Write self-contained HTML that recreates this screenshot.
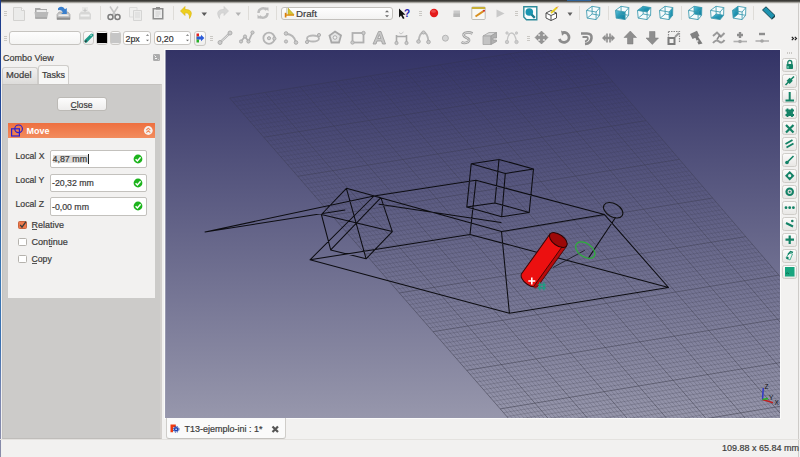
<!DOCTYPE html>
<html><head><meta charset="utf-8">
<style>
*{box-sizing:border-box;margin:0;padding:0}
html,body{width:800px;height:457px;overflow:hidden;background:#f2f1f0;font-family:"Liberation Sans",sans-serif;color:#3c3c3c}
.a{position:absolute}
.t{position:absolute;white-space:nowrap;font-size:9px;line-height:10px;-webkit-text-stroke:0.2px currentColor}
#topbar{left:0;top:0;width:800px;height:4px;background:linear-gradient(#353430 0,#45443f 30%,#8f8d88 55%,#d9d7d3 80%,#f2f1f0 100%)}
#lblue{left:0;top:0;width:1px;height:457px;background:linear-gradient(#1d3b8a,#2450a0 35%,#3a78b4 60%,#3a70b0 75%,#7a86b0 87%,#8a8ca8)}
#rline{left:798px;top:3px;width:1px;height:454px;background:#cdcbc8}
.handle{position:absolute;width:3px;height:6px;background:repeating-linear-gradient(#cac8c4 0 1px,transparent 1px 2px)}
.sep{position:absolute;width:1px;height:14px;background:#dedcd8}
#task{left:2px;top:84px;width:160px;height:354.5px;background:#cccbc9;border:1px solid #c4c2bf;border-right:2px solid #d4d1ce;border-bottom-color:#bfbdba}
#tabbar{}
.tab{position:absolute;border:1px solid #cfcdca;border-bottom:none;border-radius:3px 3px 0 0}
.btn{position:absolute;border:1px solid #bcbab6;border-radius:3px;background:linear-gradient(#fdfdfd,#eeedec)}
.inp{position:absolute;background:#fff;border:1px solid #c3c1bd;border-radius:2px}
.chk{position:absolute;width:9px;height:8.5px;border:1px solid #b5b2ad;border-radius:1.5px;background:#fff}
.okc{position:absolute;width:9px;height:9px;border-radius:50%;background:#19b019}
.snap{position:absolute;left:782px;width:14.5px;height:14px;border:1px solid #cfcdc9;border-radius:2.5px;background:linear-gradient(#fbfbfa,#e8e7e5)}
#view{left:166px;top:50px;width:614px;height:368px;overflow:hidden}
</style></head><body>
<div class="a" id="topbar"></div>
<div class="a" id="lblue"></div>
<div class="a" id="rline"></div>
<div class="a" style="left:567px;top:0;width:24px;height:1px;background:#2a6cb0;opacity:.8"></div>

<!-- toolbar row 1 -->
<div class="sep" style="left:100px;top:6px"></div>
<div class="sep" style="left:172.5px;top:6px"></div>
<div class="sep" style="left:247.5px;top:6px"></div>
<div class="sep" style="left:276px;top:6px"></div>
<div class="sep" style="left:578.5px;top:6px"></div>
<div class="sep" style="left:608px;top:6px"></div>
<div class="sep" style="left:680.5px;top:6px"></div>
<div class="sep" style="left:753px;top:6px"></div>
<svg class="a" style="left:13px;top:6px" width="13" height="15" viewBox="0 0 13 15" ><path d="M0.5 1.5H8.5L11.5 4.5V14.5H0.5Z" fill="#ebebea" stroke="#d3d2d0"/><path d="M8.5 1.5V4.5H11.5" fill="#fafafa" stroke="#d3d2d0"/></svg>
<svg class="a" style="left:34px;top:6px" width="15" height="14" viewBox="0 0 15 14" ><path d="M1 2H6L7 3H13V12.5H1Z" fill="#a8a8a8"/><path d="M2.5 4H12.5V11H2.5Z" fill="#ececec"/><path d="M0.5 6H14.5L13 12.5H1.5Z" fill="#b9b9b9"/><path d="M1.5 12H13" stroke="#9a9a9a"/></svg>
<svg class="a" style="left:56px;top:5px" width="15" height="16" viewBox="0 0 15 16" ><path d="M1 9.5L3 7H12L14 9.5V14.5H1Z" fill="#c4c4c4" stroke="#999" stroke-width="0.6"/><path d="M2.5 9.5H12.5V11H2.5Z" fill="#eeeeee"/><path d="M1 12.5H14V14.5H1Z" fill="#8f8f8f"/><path d="M2 3.2Q6 0 9 4.2L10.8 3V9H5L7 7.4Q5.5 4.6 2 5.2Z" fill="#3a7fcc"/></svg>
<svg class="a" style="left:78px;top:6px" width="14" height="15" viewBox="0 0 14 15" ><path d="M1 8L3 5.5H11L13 8V13.5H1Z" fill="#d7d7d6"/><path d="M2.5 8.5H11.5V10.5H2.5Z" fill="#f2f2f2"/><path d="M4 1H10V6H4Z" fill="#e6e6e5"/><path d="M7 2.5V5M5.5 4L7 5.5 8.5 4" stroke="#c0c0c0" fill="none"/></svg>
<svg class="a" style="left:107px;top:6px" width="14" height="15" viewBox="0 0 14 15" ><path d="M3 0.5L8.5 9M11 0.5L5.5 9" stroke="#c4c4c4" stroke-width="1.5"/><circle cx="3.5" cy="11" r="2.5" fill="none" stroke="#7c7c7c" stroke-width="1.5"/><circle cx="10.5" cy="11" r="2.5" fill="none" stroke="#7c7c7c" stroke-width="1.5"/></svg>
<svg class="a" style="left:129px;top:6px" width="14" height="15" viewBox="0 0 14 15" ><path d="M0.5 1.5H8V11H0.5Z" fill="#f0f0ef" stroke="#dcdcdb"/><path d="M4.5 4.5H12.5V14.5H4.5Z" fill="#ececeb" stroke="#d5d5d4"/><path d="M6 7H11M6 9H11M6 11H11" stroke="#d9d9d9"/></svg>
<svg class="a" style="left:152px;top:6px" width="13" height="15" viewBox="0 0 13 15" ><path d="M0.5 2H11.5V13.5H0.5Z" fill="#8e8e8e"/><path d="M2 3.5H10V12H2Z" fill="#ececec"/><path d="M4 1H8V3.5H4Z" fill="#8e8e8e"/><path d="M3.5 6H8.5M3.5 8H8.5M3.5 10H7" stroke="#cfcfcf"/></svg>
<svg class="a" style="left:180px;top:6px" width="14" height="14" viewBox="0 0 14 14" ><path d="M5 0.5L0.5 5L5 9.5V6.8Q10 6.5 9.5 12.5Q13.5 6 9 4Q7 3.3 5 3.5Z" fill="#edcf1c" stroke="#d8b210" stroke-width="0.6"/></svg>
<svg class="a" style="left:201px;top:12px" width="7" height="5" viewBox="0 0 7 5" ><path d="M0.5 0.5H6L3.25 4Z" fill="#5a5a5a"/></svg>
<svg class="a" style="left:215px;top:6px" width="14" height="14" viewBox="0 0 14 14" ><path d="M9 0.5L13.5 5L9 9.5V6.8Q4 6.5 4.5 12.5Q0.5 6 5 4Q7 3.3 9 3.5Z" fill="#d6d6d6" stroke="#cacaca" stroke-width="0.6"/></svg>
<svg class="a" style="left:235px;top:12px" width="7" height="5" viewBox="0 0 7 5" ><path d="M0.5 0.5H6L3.25 4Z" fill="#b3b3b3"/></svg>
<svg class="a" style="left:256px;top:6px" width="14" height="14" viewBox="0 0 14 14" ><path d="M2.5 7A4.5 4.5 0 0 1 10.5 4" stroke="#bdbdbd" stroke-width="2.4" fill="none"/><path d="M11.5 7A4.5 4.5 0 0 1 3.5 10" stroke="#bdbdbd" stroke-width="2.4" fill="none"/><path d="M9 1.5L12.5 1.5 12.5 5.5Z" fill="#bdbdbd"/><path d="M5 12.5L1.5 12.5 1.5 8.5Z" fill="#bdbdbd"/></svg>
<div class="btn" style="left:281px;top:6.5px;width:111.5px;height:13.5px;border-color:#c2c0bc;background:linear-gradient(#fefefe,#f3f3f2)"></div>
<svg class="a" style="left:284px;top:7px" width="11" height="12" viewBox="0 0 11 12" ><path d="M2.5 1V7" stroke="#c0c0b8" stroke-width="0.7"/><path d="M4 1V7.5H10Z" fill="#d4c432" stroke="#a89a20" stroke-width="0.5"/><path d="M1.5 7.3H10V8.8H1.5Z" fill="#e0900f"/><path d="M1.6 5.8V10.5" stroke="#d8800f" stroke-width="1.7"/></svg>
<div class="t" style="left:296px;top:9px;font-size:9.7px;color:#3b3b3b">Draft</div>
<svg class="a" style="left:384px;top:9px" width="6" height="10" viewBox="0 0 6 10" ><path d="M1 3.2L3 1.2 5 3.2ZM1 6.3L3 8.3 5 6.3Z" fill="#6a6a6a"/></svg>
<svg class="a" style="left:398px;top:8px" width="12" height="12" viewBox="0 0 12 12" ><path d="M1 0.5V9.5L3 7.5L5 11L6.5 10.2L4.6 6.8H7.5Z" fill="#111"/><text x="6" y="8.6" font-size="10" font-weight="bold" fill="#2424b0" font-family="Liberation Sans">?</text></svg>
<div class="handle" style="left:419px;top:11px"></div>
<div class="handle" style="left:515px;top:11px"></div>
<svg class="a" style="left:429px;top:8px" width="10" height="10" viewBox="0 0 10 10" ><circle cx="5" cy="5" r="4.2" fill="#e41b1b"/><ellipse cx="4.5" cy="3.2" rx="2.5" ry="1.5" fill="#f56a6a" opacity="0.6"/></svg>
<svg class="a" style="left:452.5px;top:9.5px" width="8" height="8" viewBox="0 0 8 8" ><rect x="0.5" y="0.5" width="6.5" height="6.5" fill="#cacaca"/><rect x="0.5" y="3.5" width="6.5" height="3.5" fill="#b8b8b8"/></svg>
<svg class="a" style="left:471px;top:6px" width="15" height="14" viewBox="0 0 15 14" ><rect x="0.8" y="1" width="13.4" height="12.5" rx="1" fill="#f8f8f4" stroke="#bdbdb8"/><rect x="0.8" y="1" width="13.4" height="2" fill="#c8b038"/><path d="M4.5 10.5L12.5 5.2" stroke="#d89020" stroke-width="2"/><circle cx="13" cy="4.8" r="1" fill="#d02020"/></svg>
<svg class="a" style="left:496px;top:9px" width="9" height="9" viewBox="0 0 9 9" ><path d="M0.5 0.5L8.5 4.5L0.5 8.5Z" fill="#c9c9c9"/></svg>
<svg class="a" style="left:523px;top:6px" width="15" height="15" viewBox="0 0 15 15" ><path d="M0.8 0.8H13.8V13.8H3.5L0.8 11Z" fill="#fbfdfd" stroke="#2e8b9a" stroke-width="1.4"/><circle cx="6.3" cy="6" r="3.8" fill="#1a95b0"/><path d="M8.5 8.5L11.8 11.8" stroke="#1a7d90" stroke-width="2.4"/></svg>
<svg class="a" style="left:545px;top:6px" width="14" height="15" viewBox="0 0 14 15" ><path d="M1 7L6 4.5L11.5 7V12L6 14.5L1 12Z" fill="#fff" stroke="#505050" stroke-width="1"/><path d="M1 7L6 9.5L11.5 7M6 9.5V14.5" stroke="#505050" fill="none"/><path d="M6 7L12 1.5" stroke="#e8d020" stroke-width="1.8"/><path d="M11.5 2L13 0.5" stroke="#e07030" stroke-width="1"/></svg>
<svg class="a" style="left:567px;top:12px" width="7" height="5" viewBox="0 0 7 5" ><path d="M0.5 0.5H5.5L3 4Z" fill="#606060"/></svg>
<svg class="a" style="left:582.5px;top:3px" width="20" height="20" viewBox="0 0 20 20" ><defs><linearGradient id="cg" x1="0" y1="0" x2="1" y2="1"><stop offset="0" stop-color="#62c4de"/><stop offset="0.5" stop-color="#2296b4"/><stop offset="1" stop-color="#137f9c"/></linearGradient></defs><polygon points="3.5,7.4 9,3.3 16.8,4.6 16.6,12.3 13.1,16.6 4.2,15.1" fill="#f6fbfc"/><path d="M3.5 7.4L13.1 9M13.1 9L13.1 16.6M13.1 16.6L4.2 15.1M4.2 15.1L3.5 7.4M9 3.3L16.8 4.6M16.8 4.6L16.6 12.3M16.6 12.3L9.2 11M9.2 11L9 3.3M3.5 7.4L9 3.3M13.1 9L16.8 4.6M13.1 16.6L16.6 12.3M4.2 15.1L9.2 11" stroke="#3a98ae" stroke-width="0.85" fill="none"/></svg>
<svg class="a" style="left:611.5px;top:3px" width="20" height="20" viewBox="0 0 20 20" ><defs><linearGradient id="cg" x1="0" y1="0" x2="1" y2="1"><stop offset="0" stop-color="#62c4de"/><stop offset="0.5" stop-color="#2296b4"/><stop offset="1" stop-color="#137f9c"/></linearGradient></defs><polygon points="3.5,7.4 9,3.3 16.8,4.6 16.6,12.3 13.1,16.6 4.2,15.1" fill="#f6fbfc"/><polygon points="3.5,7.4 13.1,9 13.1,16.6 4.2,15.1" fill="url(#cg)"/><path d="M3.5 7.4L13.1 9M13.1 9L13.1 16.6M13.1 16.6L4.2 15.1M4.2 15.1L3.5 7.4M9 3.3L16.8 4.6M16.8 4.6L16.6 12.3M16.6 12.3L9.2 11M9.2 11L9 3.3M3.5 7.4L9 3.3M13.1 9L16.8 4.6M13.1 16.6L16.6 12.3M4.2 15.1L9.2 11" stroke="#3a98ae" stroke-width="0.85" fill="none"/></svg>
<svg class="a" style="left:633.5px;top:3px" width="20" height="20" viewBox="0 0 20 20" ><defs><linearGradient id="cg" x1="0" y1="0" x2="1" y2="1"><stop offset="0" stop-color="#62c4de"/><stop offset="0.5" stop-color="#2296b4"/><stop offset="1" stop-color="#137f9c"/></linearGradient></defs><polygon points="3.5,7.4 9,3.3 16.8,4.6 16.6,12.3 13.1,16.6 4.2,15.1" fill="#f6fbfc"/><polygon points="3.5,7.4 13.1,9 16.8,4.6 9,3.3" fill="url(#cg)"/><path d="M3.5 7.4L13.1 9M13.1 9L13.1 16.6M13.1 16.6L4.2 15.1M4.2 15.1L3.5 7.4M9 3.3L16.8 4.6M16.8 4.6L16.6 12.3M16.6 12.3L9.2 11M9.2 11L9 3.3M3.5 7.4L9 3.3M13.1 9L16.8 4.6M13.1 16.6L16.6 12.3M4.2 15.1L9.2 11" stroke="#3a98ae" stroke-width="0.85" fill="none"/></svg>
<svg class="a" style="left:655.5px;top:3px" width="20" height="20" viewBox="0 0 20 20" ><defs><linearGradient id="cg" x1="0" y1="0" x2="1" y2="1"><stop offset="0" stop-color="#62c4de"/><stop offset="0.5" stop-color="#2296b4"/><stop offset="1" stop-color="#137f9c"/></linearGradient></defs><polygon points="3.5,7.4 9,3.3 16.8,4.6 16.6,12.3 13.1,16.6 4.2,15.1" fill="#f6fbfc"/><polygon points="13.1,9 16.8,4.6 16.6,12.3 13.1,16.6" fill="url(#cg)"/><path d="M3.5 7.4L13.1 9M13.1 9L13.1 16.6M13.1 16.6L4.2 15.1M4.2 15.1L3.5 7.4M9 3.3L16.8 4.6M16.8 4.6L16.6 12.3M16.6 12.3L9.2 11M9.2 11L9 3.3M3.5 7.4L9 3.3M13.1 9L16.8 4.6M13.1 16.6L16.6 12.3M4.2 15.1L9.2 11" stroke="#3a98ae" stroke-width="0.85" fill="none"/></svg>
<svg class="a" style="left:684.5px;top:3px" width="20" height="20" viewBox="0 0 20 20" ><defs><linearGradient id="cg" x1="0" y1="0" x2="1" y2="1"><stop offset="0" stop-color="#62c4de"/><stop offset="0.5" stop-color="#2296b4"/><stop offset="1" stop-color="#137f9c"/></linearGradient></defs><polygon points="3.5,7.4 9,3.3 16.8,4.6 16.6,12.3 13.1,16.6 4.2,15.1" fill="#f6fbfc"/><polygon points="9,3.3 16.8,4.6 16.6,12.3 9.2,11" fill="url(#cg)"/><path d="M3.5 7.4L13.1 9M13.1 9L13.1 16.6M13.1 16.6L4.2 15.1M4.2 15.1L3.5 7.4M9 3.3L16.8 4.6M16.8 4.6L16.6 12.3M16.6 12.3L9.2 11M9.2 11L9 3.3M3.5 7.4L9 3.3M13.1 9L16.8 4.6M13.1 16.6L16.6 12.3M4.2 15.1L9.2 11" stroke="#3a98ae" stroke-width="0.85" fill="none"/></svg>
<svg class="a" style="left:706.5px;top:3px" width="20" height="20" viewBox="0 0 20 20" ><defs><linearGradient id="cg" x1="0" y1="0" x2="1" y2="1"><stop offset="0" stop-color="#62c4de"/><stop offset="0.5" stop-color="#2296b4"/><stop offset="1" stop-color="#137f9c"/></linearGradient></defs><polygon points="3.5,7.4 9,3.3 16.8,4.6 16.6,12.3 13.1,16.6 4.2,15.1" fill="#f6fbfc"/><polygon points="4.2,15.1 13.1,16.6 16.6,12.3 9.2,11" fill="url(#cg)"/><path d="M3.5 7.4L13.1 9M13.1 9L13.1 16.6M13.1 16.6L4.2 15.1M4.2 15.1L3.5 7.4M9 3.3L16.8 4.6M16.8 4.6L16.6 12.3M16.6 12.3L9.2 11M9.2 11L9 3.3M3.5 7.4L9 3.3M13.1 9L16.8 4.6M13.1 16.6L16.6 12.3M4.2 15.1L9.2 11" stroke="#3a98ae" stroke-width="0.85" fill="none"/></svg>
<svg class="a" style="left:728.5px;top:3px" width="20" height="20" viewBox="0 0 20 20" ><defs><linearGradient id="cg" x1="0" y1="0" x2="1" y2="1"><stop offset="0" stop-color="#62c4de"/><stop offset="0.5" stop-color="#2296b4"/><stop offset="1" stop-color="#137f9c"/></linearGradient></defs><polygon points="3.5,7.4 9,3.3 16.8,4.6 16.6,12.3 13.1,16.6 4.2,15.1" fill="#f6fbfc"/><polygon points="3.5,7.4 9,3.3 9.2,11 4.2,15.1" fill="url(#cg)"/><path d="M3.5 7.4L13.1 9M13.1 9L13.1 16.6M13.1 16.6L4.2 15.1M4.2 15.1L3.5 7.4M9 3.3L16.8 4.6M16.8 4.6L16.6 12.3M16.6 12.3L9.2 11M9.2 11L9 3.3M3.5 7.4L9 3.3M13.1 9L16.8 4.6M13.1 16.6L16.6 12.3M4.2 15.1L9.2 11" stroke="#3a98ae" stroke-width="0.85" fill="none"/></svg>
<svg class="a" style="left:761px;top:6px" width="15" height="14" viewBox="0 0 15 14" ><path d="M1.5 4L5 0.8L14 9.5L10.5 12.8Z" fill="#1e93b0" stroke="#0d3c48" stroke-width="0.9"/><path d="M10.5 12.8L14 9.5V11L11 13.5Z" fill="#0d3c48"/></svg>
<svg class="a" style="left:791px;top:36px" width="7" height="5" viewBox="0 0 7 5" ><path d="M0.8 0.8L2.5 2.5L0.8 4.2M3.8 0.8L5.5 2.5L3.8 4.2" stroke="#222" stroke-width="1.2" fill="none"/></svg>
<div class="inp" style="left:8.5px;top:30.5px;width:72px;height:14.5px;border-color:#c6c4c0;border-radius:3px;background:linear-gradient(#fdfdfd,#f4f4f3)"></div>
<div class="btn" style="left:82.5px;top:30.5px;width:11.5px;height:14.5px;border-color:#cbc9c5"></div>
<svg class="a" style="left:83.5px;top:32.5px" width="10" height="10" viewBox="0 0 10 10" ><path d="M2 8L7.8 2.2" stroke="#1d9a88" stroke-width="3.2" stroke-linecap="round"/><path d="M6.5 2.8L7.8 1.8" stroke="#a8dcd0" stroke-width="1.2"/><path d="M1 9L2.6 7.4" stroke="#2a3a3a" stroke-width="1.4"/></svg>
<div class="btn" style="left:95.5px;top:30.5px;width:12px;height:14.5px;border-color:#cbc9c5"></div>
<div class="a" style="left:97px;top:32.5px;width:9.5px;height:10.5px;background:#000"></div>
<div class="btn" style="left:109.5px;top:30.5px;width:11.5px;height:14.5px;border-color:#cbc9c5"></div>
<div class="a" style="left:111px;top:32.5px;width:8.5px;height:10.5px;background:#c6c6c6"></div>
<div class="inp" style="left:123px;top:31px;width:27.5px;height:14px;border-color:#c9c7c3;border-radius:3px"></div>
<div class="t" style="left:125.5px;top:33.5px;font-size:8.9px;color:#333">2px</div>
<svg class="a" style="left:145px;top:33px" width="5" height="10" viewBox="0 0 5 10" ><path d="M0.9 2.8L2.5 1.2 4.1 2.8ZM0.9 6.7L2.5 8.3 4.1 6.7Z" fill="#707070"/></svg>
<div class="inp" style="left:153.5px;top:31px;width:37px;height:14px;border-color:#c9c7c3;border-radius:3px"></div>
<div class="t" style="left:156.5px;top:33.5px;font-size:8.8px;color:#333">0,20</div>
<svg class="a" style="left:185px;top:33px" width="5" height="10" viewBox="0 0 5 10" ><path d="M0.9 2.8L2.5 1.2 4.1 2.8ZM0.9 6.7L2.5 8.3 4.1 6.7Z" fill="#707070"/></svg>
<div class="btn" style="left:193.5px;top:30.5px;width:12px;height:15px;border-color:#cbc9c5"></div>
<svg class="a" style="left:195px;top:32px" width="10" height="12" viewBox="0 0 10 12" ><rect x="1.5" y="1.5" width="2.5" height="3" fill="#e52020"/><rect x="1.5" y="4.5" width="2.5" height="3" fill="#f0d020"/><rect x="1.5" y="7.5" width="2.5" height="3" fill="#28b028"/><path d="M1.5 4.5H6V2.8L9.3 6L6 9.2V7.5H1.5Z" fill="#2a5ad8"/></svg>
<div class="handle" style="left:210px;top:35.5px"></div>
<div class="handle" style="left:527px;top:35.5px"></div>
<svg class="a" style="left:217px;top:30px" width="16" height="16" viewBox="0 0 16 16" ><path d="M3 12.5L13 3" stroke="#b0b0b0" stroke-width="2.4"/><path d="M3 12.5L13 3" stroke="#e9e9e9" stroke-width="0.9"/><circle cx="3" cy="12.5" r="2" fill="#cbcbcb" stroke="#a9a9a9" stroke-width="0.9"/><circle cx="13" cy="3" r="2" fill="#cbcbcb" stroke="#a9a9a9" stroke-width="0.9"/></svg>
<svg class="a" style="left:239px;top:30px" width="16" height="16" viewBox="0 0 16 16" ><path d="M2 11.5L6 6.5L9.5 11.5L13.5 2.5" stroke="#b4b4b4" stroke-width="1.8" fill="none"/><circle cx="2" cy="11.5" r="1.6" fill="#cbcbcb" stroke="#a9a9a9" stroke-width="0.9"/><circle cx="6" cy="6.5" r="1.6" fill="#cbcbcb" stroke="#a9a9a9" stroke-width="0.9"/><circle cx="9.5" cy="11.5" r="1.6" fill="#cbcbcb" stroke="#a9a9a9" stroke-width="0.9"/><circle cx="13.5" cy="2.5" r="1.6" fill="#cbcbcb" stroke="#a9a9a9" stroke-width="0.9"/></svg>
<svg class="a" style="left:262px;top:31px" width="15" height="15" viewBox="0 0 15 15" ><circle cx="7" cy="7.2" r="5.6" fill="none" stroke="#b5b5b5" stroke-width="1.8"/><circle cx="7" cy="7.2" r="1.6" fill="#cbcbcb" stroke="#a9a9a9" stroke-width="0.9"/><circle cx="12.4" cy="7.6" r="1.6" fill="#cbcbcb" stroke="#a9a9a9" stroke-width="0.9"/></svg>
<svg class="a" style="left:283px;top:30px" width="16" height="16" viewBox="0 0 16 16" ><path d="M3 4Q11 4 13 12.5" stroke="#b7b7b7" stroke-width="1.8" fill="none"/><circle cx="3" cy="3.5" r="1.8" fill="#cbcbcb" stroke="#a9a9a9" stroke-width="0.9"/><circle cx="13" cy="12.5" r="1.8" fill="#cbcbcb" stroke="#a9a9a9" stroke-width="0.9"/><circle cx="3" cy="11.5" r="1.6" fill="#cbcbcb" stroke="#a9a9a9" stroke-width="0.9"/></svg>
<svg class="a" style="left:305px;top:31px" width="17" height="15" viewBox="0 0 17 15" ><ellipse cx="8" cy="7.5" rx="6" ry="3" fill="none" stroke="#b7b7b7" stroke-width="1.8"/><circle cx="14" cy="4" r="1.6" fill="#cbcbcb" stroke="#a9a9a9" stroke-width="0.9"/><circle cx="2" cy="11" r="1.6" fill="#cbcbcb" stroke="#a9a9a9" stroke-width="0.9"/></svg>
<svg class="a" style="left:328px;top:30px" width="15" height="16" viewBox="0 0 15 16" ><path d="M7 1.5L13 5.5L11 12.5H3.5L1.5 5.5Z" fill="#e4e4e4" stroke="#a8a8a8" stroke-width="1.8"/><circle cx="7" cy="7.5" r="1.8" fill="#f3f3f3" stroke="#b0b0b0"/></svg>
<svg class="a" style="left:350px;top:30px" width="16" height="16" viewBox="0 0 16 16" ><rect x="2.5" y="3" width="11" height="9.5" fill="none" stroke="#b0b0b0" stroke-width="1.8"/><circle cx="2.5" cy="12.5" r="1.7" fill="#cbcbcb" stroke="#a9a9a9" stroke-width="0.9"/><circle cx="13.5" cy="3" r="1.7" fill="#cbcbcb" stroke="#a9a9a9" stroke-width="0.9"/></svg>
<svg class="a" style="left:372px;top:30px" width="15" height="16" viewBox="0 0 15 16" ><path d="M1 14L6.5 1.5H9L13.5 14H10.5L9.5 11H5L4 14ZM5.8 8.5H8.8L7.3 4.5Z" fill="#c6c6c6" stroke="#9c9c9c" stroke-width="0.8"/></svg>
<svg class="a" style="left:394px;top:30px" width="15" height="16" viewBox="0 0 15 16" ><path d="M2.5 5V13M12.5 5V13M2.5 6.5H12.5" stroke="#ababab" stroke-width="1.6"/><path d="M5 2.5L7 4L9.5 2" stroke="#c8c8c8" stroke-width="1" fill="none"/><circle cx="2.5" cy="13" r="1.6" fill="#cbcbcb" stroke="#a9a9a9" stroke-width="0.9"/><circle cx="12.5" cy="13" r="1.6" fill="#cbcbcb" stroke="#a9a9a9" stroke-width="0.9"/></svg>
<svg class="a" style="left:416px;top:30px" width="15" height="16" viewBox="0 0 15 16" ><path d="M2.5 11.5Q3.5 2.5 7.5 2.5Q11.5 2.5 12.5 11.5" stroke="#b8b8b8" stroke-width="1.8" fill="none"/><circle cx="2.5" cy="11.5" r="1.8" fill="#cbcbcb" stroke="#a9a9a9" stroke-width="0.9"/><circle cx="7.5" cy="2.5" r="1.6" fill="#cbcbcb" stroke="#a9a9a9" stroke-width="0.9"/><circle cx="12.5" cy="12" r="1.8" fill="#cbcbcb" stroke="#a9a9a9" stroke-width="0.9"/></svg>
<svg class="a" style="left:441px;top:34px" width="9" height="9" viewBox="0 0 9 9" ><circle cx="4.4" cy="4.2" r="3" fill="#d5d5d5" stroke="#b0b0b0" stroke-width="0.9"/></svg>
<svg class="a" style="left:460px;top:30px" width="15" height="16" viewBox="0 0 15 16" ><path d="M12.5 3.5Q9 1.5 5 3Q1.5 5 6 7.5Q11 9.5 8 12Q4 14 1.5 12" stroke="#a3a3a3" stroke-width="2.6" fill="none"/><path d="M12.5 3.5Q9 1.5 5 3Q1.5 5 6 7.5Q11 9.5 8 12Q4 14 1.5 12" stroke="#e5e5e5" stroke-width="0.8" fill="none"/></svg>
<svg class="a" style="left:482px;top:30px" width="16" height="16" viewBox="0 0 16 16" ><path d="M1 6L7 2.5H14.5L9 6Z" fill="#d8d8d8" stroke="#a5a5a5" stroke-width="0.8"/><path d="M1 6H9V14.5L1 14.5Z" fill="#c3c3c3" stroke="#a5a5a5" stroke-width="0.8"/><path d="M9 6L14.5 2.5V8H11V10H14.5V11.5L9 14.5Z" fill="#b0b0b0" stroke="#9b9b9b" stroke-width="0.8"/></svg>
<svg class="a" style="left:504px;top:30px" width="16" height="16" viewBox="0 0 16 16" ><path d="M3 12Q4 3 7.5 3Q11 3 12.5 12" stroke="#c5c5c5" stroke-width="1.3" fill="none"/><path d="M3 3L5.5 5M12.5 3L10 5" stroke="#c8c8c8"/><circle cx="3" cy="12" r="1.7" fill="#cbcbcb" stroke="#bdbdbd" stroke-width="0.9"/><circle cx="12.5" cy="12" r="1.7" fill="#cbcbcb" stroke="#bdbdbd" stroke-width="0.9"/><circle cx="3" cy="3" r="1.2" fill="#cbcbcb" stroke="#c5c5c5" stroke-width="0.9"/><circle cx="12.5" cy="3" r="1.2" fill="#cbcbcb" stroke="#c5c5c5" stroke-width="0.9"/></svg>
<svg class="a" style="left:534px;top:30px" width="16" height="16" viewBox="0 0 16 16" ><path d="M7.5 1L10.5 4H8.7V6.3H11V4.5L14 7.5L11 10.5V8.7H8.7V11H10.5L7.5 14L4.5 11H6.3V8.7H4V10.5L1 7.5L4 4.5V6.3H6.3V4H4.5Z" fill="#959595" stroke="#818181" stroke-width="0.5"/></svg>
<svg class="a" style="left:557px;top:30px" width="15" height="16" viewBox="0 0 15 16" ><path d="M6 2.5A5 5 0 1 1 2.3 9" stroke="#8c8c8c" stroke-width="2.8" fill="none"/><path d="M4 0.5L8.5 2.8L5 5.8Z" fill="#8c8c8c"/></svg>
<svg class="a" style="left:579px;top:30px" width="15" height="16" viewBox="0 0 15 16" ><path d="M2 3.5H8Q13 3.5 12.5 8Q12 13.5 6 14" stroke="#8c8c8c" stroke-width="2.6" fill="none"/><path d="M3.5 7H7.5Q9 7 8.8 9Q8.5 11 6 11.5" stroke="#8c8c8c" stroke-width="1.8" fill="none"/></svg>
<svg class="a" style="left:601px;top:31px" width="15" height="14" viewBox="0 0 15 14" ><path d="M1 7L4.5 3.5V5.8H10.5V3.5L14 7L10.5 10.5V8.2H4.5V10.5Z" fill="#8f8f8f"/><path d="M6 2.5V11.5M9 2.5V11.5" stroke="#8f8f8f" stroke-width="1.6"/></svg>
<svg class="a" style="left:623px;top:30px" width="15" height="16" viewBox="0 0 15 16" ><path d="M7.3 1L13.5 7.5H10V14H4.5V7.5H1Z" fill="#8e8e8e" stroke="#7a7a7a" stroke-width="0.5"/></svg>
<svg class="a" style="left:645px;top:30px" width="15" height="16" viewBox="0 0 15 16" ><path d="M7.3 14.5L13.5 8H10V1.5H4.5V8H1Z" fill="#8e8e8e" stroke="#7a7a7a" stroke-width="0.5"/></svg>
<svg class="a" style="left:667px;top:30px" width="15" height="16" viewBox="0 0 15 16" ><path d="M1.5 1.5H12.5V12.5" stroke="#8c8c8c" stroke-dasharray="1.5 1" fill="none" stroke-width="1.2"/><path d="M1.5 1.5V13" stroke="#8c8c8c" stroke-dasharray="1.5 1" fill="none" stroke-width="1.2"/><rect x="1.5" y="8" width="6" height="6" fill="none" stroke="#7c7c7c" stroke-width="2"/><path d="M8 7L12 3" stroke="#9a9a9a" stroke-width="2"/></svg>
<svg class="a" style="left:689px;top:30px" width="15" height="16" viewBox="0 0 15 16" ><path d="M1 4L8 0.8L10.5 6L3.5 9Z" fill="#828282"/><path d="M6 7L8.5 6L13.5 13.5L9.5 14.5Z" fill="#7a7a7a"/><circle cx="8.5" cy="11" r="1" fill="#ddd"/></svg>
<svg class="a" style="left:711px;top:30px" width="15" height="16" viewBox="0 0 15 16" ><path d="M2 6L6 2.5L10 6.5L13.5 3M2 13Q5 9 8 11.5Q11 14 13.5 10" stroke="#9a9a9a" stroke-width="2" fill="none"/><path d="M6 9.5L8.5 5.5L10 7" stroke="#8a8a8a" stroke-width="1.5" fill="none"/></svg>
<svg class="a" style="left:733px;top:30px" width="15" height="16" viewBox="0 0 15 16" ><path d="M7 2V8M4 5H10" stroke="#8e8e8e" stroke-width="2.4"/><path d="M0.5 11.5H14" stroke="#b0b0b0" stroke-width="1.6"/><circle cx="7" cy="11.5" r="1.8" fill="#a5a5a5"/></svg>
<svg class="a" style="left:755px;top:30px" width="15" height="16" viewBox="0 0 15 16" ><path d="M4 4H10" stroke="#8e8e8e" stroke-width="2.4"/><path d="M0.5 11H14" stroke="#b0b0b0" stroke-width="1.6"/><circle cx="7" cy="11" r="1.8" fill="#a5a5a5"/></svg>
<div class="handle" style="left:4px;top:11px"></div>
<div class="handle" style="left:4px;top:36px"></div>

<!-- Combo view -->
<div class="t" style="left:3px;top:53px;font-size:9px">Combo View</div>
<svg class="a" style="left:153px;top:54px" width="7" height="7"><rect x="0" y="0" width="7" height="7" rx="1.2" fill="#acacac"/><path d="M1.5 1.5L3 3M2 4.5H4M5.5 5.5L5 5" stroke="#fff" stroke-width="0.9"/></svg>

<!-- tabs -->
<div class="tab" style="left:2px;top:67px;width:36px;height:17px;background:linear-gradient(#f1f0ef,#dddcda)"></div>
<div class="tab" style="left:38px;top:65px;width:31px;height:19px;background:#f7f7f6"></div>
<div class="t" style="left:6px;top:70px;font-size:9.4px">Model</div>
<div class="t" style="left:42px;top:70px">Tasks</div>

<div class="a" id="task"></div>
<div class="btn" style="left:57px;top:97px;width:50px;height:14px"></div>
<div class="t" style="left:70.5px;top:100px;font-size:8.6px">Close</div>

<div class="a" style="left:8px;top:122.5px;width:147px;height:15px;background:linear-gradient(#ee7040,#f28c5e)"></div>
<div class="t" style="left:26.5px;top:125.5px;font-weight:bold;color:#fff;font-size:9px;-webkit-text-stroke:0">Move</div>
<svg class="a" style="left:10px;top:123px" width="15" height="15"><rect x="1.6" y="5.8" width="7.8" height="7.2" fill="#f08050" stroke="#2a20d0" stroke-width="1.2"/><circle cx="8.6" cy="5.8" r="3.8" fill="none" stroke="#2a20d0" stroke-width="1.2"/></svg>
<div class="a" style="left:8px;top:137.5px;width:147px;height:160.5px;background:#f2f1f0"></div>
<svg class="a" style="left:143px;top:125px" width="11" height="11"><circle cx="5.3" cy="5.5" r="4.4" fill="#f5f1ef"/><path d="M3.3 5L5.3 3.2L7.3 5M3.3 7.6L5.3 5.8L7.3 7.6" stroke="#f08a5a" stroke-width="1.1" fill="none"/></svg>

<div class="t" style="left:15.5px;top:151px;font-size:8.7px">Local X</div>
<div class="t" style="left:15.5px;top:175px;font-size:8.7px">Local Y</div>
<div class="t" style="left:15.5px;top:199px;font-size:8.7px">Local Z</div>

<div class="inp" style="left:50px;top:150px;width:97px;height:18px"></div>
<div class="inp" style="left:49.5px;top:174px;width:97.5px;height:18px"></div>
<div class="inp" style="left:49.5px;top:197px;width:97.5px;height:19px"></div>
<div class="a" style="left:52.5px;top:155px;width:35px;height:8px;background:#dcdbd9"></div>
<div class="a" style="left:87.5px;top:154px;width:1px;height:10px;background:#222"></div>
<div class="t" style="left:52.5px;top:154px;font-size:8.9px">4,87 mm</div>
<div class="t" style="left:52px;top:178px;font-size:8.75px">-20,32 mm</div>
<div class="t" style="left:52px;top:201.5px;font-size:8.75px">-0,00 mm</div>
<svg class="a" style="left:133px;top:154px" width="10" height="10"><circle cx="5" cy="5" r="4.4" fill="#1db41d"/><path d="M2.6 5.2L4.4 7L7.6 3.3" stroke="#fff" stroke-width="1.5" fill="none"/></svg>
<svg class="a" style="left:133px;top:178px" width="10" height="10"><circle cx="5" cy="5" r="4.4" fill="#1db41d"/><path d="M2.6 5.2L4.4 7L7.6 3.3" stroke="#fff" stroke-width="1.5" fill="none"/></svg>
<svg class="a" style="left:133px;top:201px" width="10" height="10"><circle cx="5" cy="5" r="4.4" fill="#1db41d"/><path d="M2.6 5.2L4.4 7L7.6 3.3" stroke="#fff" stroke-width="1.5" fill="none"/></svg>

<div class="chk" style="left:17.5px;top:220.5px;background:#ef7a4c;border-color:#c9653f"></div>
<svg class="a" style="left:17.5px;top:219px" width="10" height="10"><path d="M2.2 5.8L4 8.2L8 2.6" stroke="#3a3a3a" stroke-width="1.3" fill="none"/></svg>
<div class="chk" style="left:17.5px;top:237.5px"></div>
<div class="chk" style="left:17.5px;top:254.5px"></div>
<div class="a" style="left:31.5px;top:229px;width:5px;height:1px;background:#555"></div>
<div class="a" style="left:48.5px;top:246px;width:3px;height:1px;background:#555"></div>
<div class="a" style="left:31.5px;top:263px;width:5px;height:1px;background:#555"></div>
<div class="a" style="left:70.5px;top:108.5px;width:6px;height:1px;background:#555"></div>
<div class="t" style="left:31.5px;top:220px">Relative</div>
<div class="t" style="left:31.5px;top:236.5px;font-size:9.1px">Continue</div>
<div class="t" style="left:31.5px;top:253.5px;font-size:8.7px">Copy</div>

<!-- 3D view -->
<div class="a" style="left:164px;top:49px;width:617px;height:370px;background:#fbfbfa"></div>
<div class="a" style="left:165px;top:50px;width:615px;height:368px;background:#9a9ab0"></div>
<div class="a" id="view"><svg width="614" height="368" style="position:absolute;left:0;top:0">
<defs><linearGradient id="bg" x1="0" y1="0" x2="0" y2="1"><stop offset="0" stop-color="#333366"/><stop offset="1" stop-color="#9797ac"/></linearGradient>
<clipPath id="vc"><rect width="614" height="368"/></clipPath>
<linearGradient id="gm" x1="0" y1="0" x2="0" y2="1"><stop offset="0" stop-color="#fff" stop-opacity="0.5"/><stop offset="0.5" stop-color="#fff" stop-opacity="0.8"/><stop offset="1" stop-color="#fff" stop-opacity="1"/></linearGradient>
<mask id="gmask" maskUnits="userSpaceOnUse" x="0" y="0" width="614" height="368"><rect width="614" height="368" fill="url(#gm)"/></mask></defs>
<rect width="614" height="368" fill="url(#bg)"/>
<g clip-path="url(#vc)">
<g mask="url(#gmask)"><path d="M67.20 47.49L404.58 435.12M67.09 51.97L416.62 -3.29M70.72 46.93L408.04 434.54M70.50 55.89L419.97 0.61M74.24 46.38L411.49 433.96M73.92 59.80L423.32 4.50M77.76 45.82L414.95 433.38M77.33 63.72L426.66 8.40M81.28 45.26L418.40 432.81M80.74 67.64L430.01 12.29M84.80 44.71L421.86 432.23M84.15 71.56L433.35 16.19M88.32 44.15L425.31 431.65M87.55 75.47L436.69 20.08M91.84 43.60L428.76 431.07M90.96 79.39L440.04 23.97M95.35 43.04L432.21 430.49M94.37 83.30L443.38 27.86M102.39 41.93L439.12 429.34M101.18 91.12L450.06 35.64M105.90 41.37L442.57 428.76M104.58 95.04L453.40 39.53M109.42 40.82L446.02 428.18M107.99 98.95L456.74 43.42M112.93 40.26L449.47 427.61M111.39 102.85L460.07 47.30M116.45 39.71L452.92 427.03M114.79 106.76L463.41 51.19M119.96 39.15L456.37 426.45M118.19 110.67L466.75 55.08M123.48 38.60L459.82 425.87M121.59 114.58L470.08 58.96M126.99 38.04L463.27 425.30M124.99 118.48L473.42 62.84M130.50 37.49L466.71 424.72M128.39 122.39L476.75 66.72M137.52 36.38L473.61 423.57M135.19 130.19L483.42 74.49M141.03 35.82L477.05 422.99M138.58 134.09L486.75 78.37M144.54 35.27L480.50 422.41M141.98 138.00L490.08 82.24M148.05 34.71L483.94 421.84M145.37 141.90L493.41 86.12M151.56 34.16L487.39 421.26M148.77 145.80L496.74 90.00M155.07 33.60L490.83 420.68M152.16 149.69L500.07 93.88M158.58 33.05L494.28 420.11M155.55 153.59L503.40 97.75M162.09 32.50L497.72 419.53M158.95 157.49L506.72 101.63M165.59 31.94L501.16 418.96M162.34 161.38L510.05 105.50M172.61 30.83L508.04 417.80M169.12 169.17L516.70 113.24M176.11 30.28L511.49 417.23M172.51 173.06L520.03 117.11M179.62 29.73L514.93 416.65M175.89 176.96L523.35 120.98M183.12 29.17L518.37 416.08M179.28 180.85L526.67 124.85M186.63 28.62L521.81 415.50M182.67 184.74L529.99 128.72M190.13 28.07L525.24 414.93M186.05 188.63L533.31 132.59M193.63 27.51L528.68 414.35M189.44 192.52L536.64 136.45M197.13 26.96L532.12 413.77M192.82 196.40L539.95 140.32M200.64 26.41L535.56 413.20M196.21 200.29L543.27 144.18M207.64 25.30L542.43 412.05M202.97 208.06L549.91 151.91M211.14 24.75L545.87 411.47M206.35 211.94L553.23 155.77M214.64 24.19L549.30 410.90M209.73 215.83L556.54 159.63M218.14 23.64L552.74 410.32M213.11 219.71L559.86 163.49M221.64 23.09L556.17 409.75M216.49 223.59L563.17 167.35M225.14 22.54L559.61 409.17M219.87 227.47L566.48 171.21M228.63 21.98L563.04 408.60M223.24 231.35L569.80 175.07M232.13 21.43L566.47 408.03M226.62 235.23L573.11 178.93M235.63 20.88L569.91 407.45M230.00 239.11L576.42 182.78M242.62 19.77L576.77 406.30M236.74 246.86L583.04 190.49M246.11 19.22L580.20 405.73M240.12 250.74L586.35 194.34M249.61 18.67L583.63 405.15M243.49 254.61L589.66 198.20M253.10 18.12L587.06 404.58M246.86 258.48L592.97 202.05M256.60 17.56L590.49 404.01M250.23 262.36L596.27 205.90M260.09 17.01L593.92 403.43M253.60 266.23L599.58 209.75M263.58 16.46L597.35 402.86M256.97 270.10L602.88 213.60M267.07 15.91L600.78 402.28M260.34 273.97L606.19 217.44M270.57 15.36L604.20 401.71M263.71 277.84L609.49 221.29M277.55 14.25L611.06 400.56M270.44 285.57L616.10 228.98M281.04 13.70L614.48 399.99M273.81 289.44L619.40 232.83M284.53 13.15L617.91 399.42M277.17 293.30L622.70 236.67M288.02 12.60L621.33 398.84M280.53 297.17L626.00 240.51M291.50 12.05L624.76 398.27M283.90 301.03L629.30 244.35M294.99 11.50L628.18 397.70M287.26 304.89L632.60 248.19M298.48 10.95L631.60 397.13M290.62 308.75L635.89 252.03M301.97 10.40L635.03 396.55M293.98 312.62L639.19 255.87M305.45 9.85L638.45 395.98M297.34 316.48L642.49 259.71M312.42 8.74L645.29 394.83M304.06 324.19L649.08 267.39M315.91 8.19L648.71 394.26M307.42 328.05L652.37 271.22M319.39 7.64L652.14 393.69M310.77 331.91L655.66 275.06M322.88 7.09L655.56 393.12M314.13 335.76L658.96 278.89M326.36 6.54L658.97 392.54M317.49 339.62L662.25 282.72M329.84 5.99L662.39 391.97M320.84 343.47L665.54 286.56M333.32 5.44L665.81 391.40M324.20 347.32L668.83 290.39M336.81 4.89L669.23 390.83M327.55 351.18L672.12 294.22M340.29 4.34L672.65 390.26M330.90 355.03L675.41 298.05M347.25 3.24L679.48 389.11M337.60 362.73L681.98 305.70M350.73 2.69L682.90 388.54M340.95 366.57L685.27 309.53M354.21 2.14L686.31 387.97M344.30 370.42L688.56 313.36M357.69 1.59L689.73 387.40M347.65 374.27L691.84 317.18M361.16 1.04L693.14 386.83M351.00 378.11L695.12 321.01M364.64 0.49L696.56 386.26M354.35 381.96L698.41 324.83M368.12 -0.06L699.97 385.68M357.69 385.80L701.69 328.65M371.60 -0.61L703.38 385.11M361.04 389.65L704.97 332.47M375.07 -1.15L706.79 384.54M364.38 393.49L708.25 336.29M382.02 -2.25L713.62 383.40M371.07 401.17L714.81 343.93M385.50 -2.80L717.03 382.83M374.41 405.01L718.09 347.75M388.97 -3.35L720.44 382.26M377.75 408.85L721.37 351.57M392.44 -3.90L723.85 381.69M381.09 412.69L724.65 355.38M395.92 -4.45L727.26 381.12M384.43 416.53L727.93 359.20M399.39 -5.00L730.67 380.55M387.77 420.36L731.20 363.02M402.86 -5.55L734.08 379.98M391.11 424.20L734.48 366.83M406.33 -6.09L737.48 379.41M394.45 428.03L737.75 370.64M409.80 -6.64L740.89 378.84M397.79 431.86L741.03 374.45" stroke="#323240" stroke-opacity="0.22" stroke-width="0.95" fill="none"/>
<path d="M63.68 48.04L401.12 435.70M63.68 48.04L413.28 -7.19M98.87 42.48L435.67 429.92M97.77 87.21L446.72 31.75M134.01 36.93L470.16 424.14M131.79 126.29L480.09 70.61M169.10 31.39L504.60 418.38M165.73 165.28L513.38 109.37M204.14 25.85L539.00 412.62M199.59 204.18L546.59 148.05M239.12 20.32L573.34 406.88M233.37 242.98L579.73 186.64M274.06 14.81L607.63 401.14M267.07 281.70L612.79 225.14M308.94 9.29L641.87 395.41M300.70 320.33L645.78 263.55M343.77 3.79L676.06 389.68M334.25 358.88L678.70 301.88M378.55 -1.70L710.21 383.97M367.73 397.33L711.53 340.11M413.28 -7.19L744.30 378.27M401.12 435.70L744.30 378.27" stroke="#30303e" stroke-opacity="0.5" stroke-width="0.95" fill="none"/></g>
<path d="M208.0 146.0L310.0 130.3M310.0 130.3L438.5 164.6M438.5 164.6L335.5 181.6M335.5 181.6L208.0 146.0M144.0 209.8L343.4 263.2M343.4 263.2L502.5 237.5M502.5 237.5L304.0 184.4M304.0 184.4L144.0 209.8M208.0 146.0L144.0 209.8M310.0 130.3L304.0 184.4M438.5 164.6L502.5 237.5M335.5 181.6L343.4 263.2M305.2 113.8L333.0 109.4M333.0 109.4L367.5 119.0M367.5 119.0L339.3 123.4M339.3 123.4L305.2 113.8M300.8 157.1L328.9 152.9M328.9 152.9L363.2 162.5M363.2 162.5L335.7 166.7M335.7 166.7L300.8 157.1M305.2 113.8L300.8 157.1M333.0 109.4L328.9 152.9M367.5 119.0L363.2 162.5M339.3 123.4L335.7 166.7M180.4 138.3L214.9 147.7M214.9 147.7L226.3 181.6M226.3 181.6L200.1 208.8M200.1 208.8L164.7 199.9M164.7 199.9L155.4 164.5M155.4 164.5L180.4 138.3M180.4 138.3L200.1 208.8M214.9 147.7L164.7 199.9M226.3 181.6L155.4 164.5M39.0 182.0L208.0 146.0M39.0 182.0L179.0 160.0M213.0 154.3L335.0 172.6M449.4 167.7L422.9 207.4" stroke="#0d0d12" stroke-width="1.05" fill="none" stroke-linecap="round"/>
<path d="M418.79999999999995 200.3L387 217.5" stroke="#15151c" stroke-width="0.8" fill="none"/>
<ellipse cx="447.20000000000005" cy="160.2" rx="10.5" ry="6.6" transform="rotate(30 447.20000000000005 160.2)" stroke="#111" stroke-width="1.1" fill="none"/>
<ellipse cx="419.29999999999995" cy="200.2" rx="10.8" ry="6.6" transform="rotate(35 419.29999999999995 200.2)" stroke="#2db03a" stroke-width="1.25" fill="none"/>
<g transform="translate(392.3,190.0) rotate(125.6)"><path d="M0 -10.2 L48.59156305368245 -10.2 A5.5 10.2 0 0 1 48.59156305368245 10.2 L0 10.2 Z" fill="#ec1010" stroke="#3a0606" stroke-width="1"/><rect x="0" y="-10.2" width="52.59156305368245" height="3.2" fill="#a80a0a" opacity="0.75"/><path d="M3 -6.999999999999999 L52.59156305368245 -6.999999999999999" stroke="#4a0606" stroke-width="0.9"/><ellipse cx="0" cy="0" rx="5.5" ry="10.2" fill="#9c0808" stroke="#2a0404" stroke-width="1"/></g><path d="M362.29999999999995 231H369.29999999999995M365.79999999999995 227.5V234.5" stroke="#fff" stroke-width="1.6"/><path d="M373.79999999999995 232.3V240.3M377.79999999999995 232.3V240.3M371.79999999999995 234.8H379.79999999999995M371.79999999999995 237.8H379.79999999999995" stroke="#1aa080" stroke-width="1.3"/>
<path d="M596.5 349.5L597.3 338.0" stroke="#3038c8" stroke-width="1.5"/><path d="M596.5 349.5L607.0 352.7" stroke="#c02020" stroke-width="1.5"/><path d="M596.5 349.5L602.0 348.5" stroke="#22b022" stroke-width="1.5"/><text x="598.5" y="338.5" font-size="6.5" fill="#111" font-family="Liberation Sans">Z</text><text x="603.0" y="350.0" font-size="6.5" fill="#111" font-family="Liberation Sans">Y</text><text x="608.5" y="354.5" font-size="6.5" fill="#111" font-family="Liberation Sans">X</text>
</g></svg></div>

<!-- snap toolbar -->
<div class="snap" style="top:57.5px"></div>
<svg class="a" style="left:782.7px;top:57.7px" width="14" height="14" viewBox="0 0 14 14" ><rect x="3.5" y="6" width="6.5" height="5" rx="0.8" fill="#138266"/><path d="M4.8 6V4.5A2 2 0 0 1 8.8 4.5V6" stroke="#138266" stroke-width="1.3" fill="none"/><rect x="4" y="8" width="2" height="2.5" fill="#4fb69a"/></svg>
<div class="snap" style="top:73.5px"></div>
<svg class="a" style="left:782.7px;top:73.7px" width="14" height="14" viewBox="0 0 14 14" ><path d="M2.5 11L11 2.5" stroke="#138266" stroke-width="1.6"/><path d="M6.7 3.7L9.8 6.8L6.7 9.9L3.6 6.8Z" fill="#138266"/></svg>
<div class="snap" style="top:89.4px"></div>
<svg class="a" style="left:782.7px;top:89.6px" width="14" height="14" viewBox="0 0 14 14" ><path d="M6.7 2V10M2.5 10.5H11" stroke="#138266" stroke-width="2"/></svg>
<div class="snap" style="top:105.3px"></div>
<svg class="a" style="left:782.7px;top:105.5px" width="14" height="14" viewBox="0 0 14 14" ><path d="M4.5 2.5V11M9 2.5V11M2.5 4.5H11M2.5 9H11" stroke="#138266" stroke-width="1.8"/><circle cx="6.7" cy="6.7" r="2" fill="#138266"/></svg>
<div class="snap" style="top:121.3px"></div>
<svg class="a" style="left:782.7px;top:121.5px" width="14" height="14" viewBox="0 0 14 14" ><path d="M3 3L10.5 10.5M10.5 3L3 10.5" stroke="#138266" stroke-width="2.2"/></svg>
<div class="snap" style="top:137.2px"></div>
<svg class="a" style="left:782.7px;top:137.4px" width="14" height="14" viewBox="0 0 14 14" ><path d="M2.5 7L9.5 3M3.5 10.5L10.5 6.5" stroke="#138266" stroke-width="1.8"/></svg>
<div class="snap" style="top:153.2px"></div>
<svg class="a" style="left:782.7px;top:153.4px" width="14" height="14" viewBox="0 0 14 14" ><path d="M3 10.5L10.5 3" stroke="#138266" stroke-width="1.6"/><circle cx="4" cy="9.5" r="1.8" fill="#138266"/></svg>
<div class="snap" style="top:169.1px"></div>
<svg class="a" style="left:782.7px;top:169.3px" width="14" height="14" viewBox="0 0 14 14" ><path d="M6.7 2L11.4 6.7L6.7 11.4L2 6.7Z" fill="#138266"/><circle cx="6.7" cy="6.7" r="1.6" fill="#eee"/></svg>
<div class="snap" style="top:185.1px"></div>
<svg class="a" style="left:782.7px;top:185.3px" width="14" height="14" viewBox="0 0 14 14" ><circle cx="6.7" cy="6.7" r="4.3" fill="#138266"/><circle cx="6.7" cy="6.7" r="2.2" fill="#ddd"/><circle cx="6.7" cy="6.7" r="1" fill="#138266"/></svg>
<div class="snap" style="top:201.0px"></div>
<svg class="a" style="left:782.7px;top:201.2px" width="14" height="14" viewBox="0 0 14 14" ><circle cx="3" cy="6.7" r="1.4" fill="#138266"/><circle cx="6.7" cy="6.7" r="1.4" fill="#138266"/><circle cx="10.4" cy="6.7" r="1.4" fill="#138266"/></svg>
<div class="snap" style="top:217.0px"></div>
<svg class="a" style="left:782.7px;top:217.2px" width="14" height="14" viewBox="0 0 14 14" ><path d="M3 6L10 9.5" stroke="#138266" stroke-width="2"/><circle cx="9.3" cy="4" r="1.3" fill="#138266"/></svg>
<div class="snap" style="top:232.9px"></div>
<svg class="a" style="left:782.7px;top:233.1px" width="14" height="14" viewBox="0 0 14 14" ><path d="M6.7 2.5V11M2.5 6.7H11" stroke="#138266" stroke-width="2.2"/></svg>
<div class="snap" style="top:248.9px"></div>
<svg class="a" style="left:782.7px;top:249.1px" width="14" height="14" viewBox="0 0 14 14" ><path d="M3 9L6 4L9.5 5L7 11Z" fill="none" stroke="#4fb69a" stroke-width="1"/><path d="M5 5.5L7.5 2.5L10 3.5" stroke="#138266" stroke-width="1.4" fill="none"/><circle cx="4.5" cy="9" r="1.2" fill="#138266"/></svg>
<div class="snap" style="top:264.9px"></div>
<svg class="a" style="left:782.7px;top:265.1px" width="14" height="14" viewBox="0 0 14 14" ><rect x="2" y="2" width="9.5" height="9.5" fill="#17a57f"/><path d="M3 8.5Q5 7 6 9" stroke="#0c5c44" stroke-width="0.7" fill="none"/></svg>
<div class="handle" style="left:787px;top:52px;width:5px;height:2px;background:repeating-linear-gradient(90deg,#cac8c4 0 1px,transparent 1px 2px)"></div>

<!-- doc tab -->
<div class="a" style="left:165.5px;top:418px;width:120px;height:20.5px;background:#fafafa;border:1px solid #cfcdc9;border-top:none;border-bottom-color:#c4c2bf;border-radius:0 0 3px 3px"></div>
<div class="t" style="left:184.5px;top:424px">T13-ejemplo-ini : 1*</div>
<svg class="a" style="left:169.5px;top:423.5px" width="11" height="10"><path d="M0.5 0.5H5.8V3.2H3V8.2H0.5Z" fill="#f03a10"/><circle cx="6.1" cy="5.3" r="2.9" fill="none" stroke="#1a3aa8" stroke-width="1" stroke-dasharray="1.3 1"/><circle cx="6.1" cy="5.3" r="2.3" fill="#1f42b0"/><circle cx="6.1" cy="5.3" r="0.8" fill="#fff"/></svg>
<svg class="a" style="left:270.5px;top:424.5px" width="9" height="9"><path d="M1.5 1.5L7 7M7 1.5L1.5 7" stroke="#555" stroke-width="2.2"/></svg>

<!-- status -->
<div class="a" style="left:0;top:438.5px;width:800px;height:1px;background:#e4e2df"></div>
<div class="t" style="left:722px;top:442.5px;font-size:9px">109.88 x 65.84 mm</div>
</body></html>
